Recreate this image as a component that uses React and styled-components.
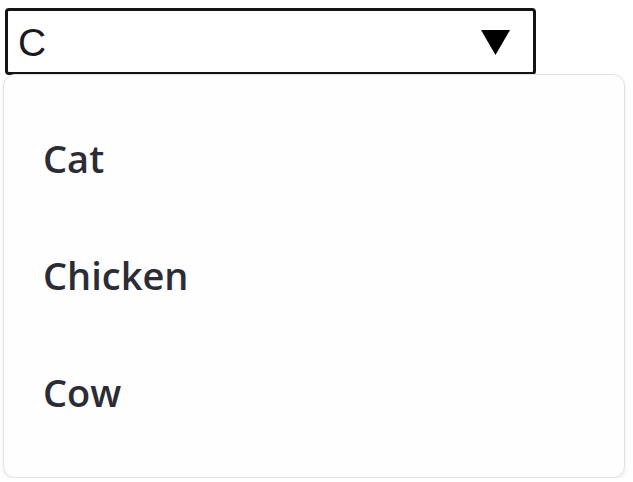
import React from "react";
import styled, { createGlobalStyle } from "styled-components";

const Global = createGlobalStyle`
  html, body { margin: 0; padding: 0; background: #ffffff; }
  body { font-family: "Open Sans", "Liberation Sans", sans-serif; }
`;

const Page = styled.div`
  display: flex;
  flex-direction: column;
  align-items: flex-start;
  padding: 8px 0 0 3px;
`;

const Combo = styled.div`
  box-sizing: border-box;
  margin-left: 2px;
  width: 531px;
  height: 67px;
  border: 3px solid #141414;
  border-radius: 4px;
  display: flex;
  align-items: center;
  justify-content: space-between;
  padding: 0 23px 0 10px;
  background: #ffffff;
`;

const Value = styled.span`
  font-family: "Liberation Sans", Arial, sans-serif;
  font-size: 39px;
  line-height: 1;
  color: #1a1a22;
  margin-top: 1px;
`;

const Arrow = styled.svg`
  width: 29px;
  height: 25px;
  display: block;
  margin-top: 2px;
`;

const Menu = styled.ul`
  box-sizing: border-box;
  list-style: none;
  margin: -1px 0 0 0;
  width: 622px;
  height: 404px;
  padding: 25px 0 0 0;
  background: #fefefe;
  border: 1px solid #e2e2e4;
  border-radius: 12px;
  box-shadow: 0 2px 4px rgba(0, 0, 0, 0.07);
`;

const Item = styled.li`
  height: 117px;
  line-height: 117px;
  padding-left: 39px;
  font-size: 38px;
  font-weight: 600;
  color: #2c2c36;
  font-family: "Open Sans", "Noto Sans", sans-serif;
`;

export default function App() {
  const options = ["Cat", "Chicken", "Cow"];
  return (
    <>
      <Global />
      <Page>
        <Combo>
          <Value>C</Value>
          <Arrow viewBox="0 0 29 25">
            <polygon points="0,0 29,0 14.5,25" fill="#000" />
          </Arrow>
        </Combo>
        <Menu>
          {options.map((o) => (
            <Item key={o}>{o}</Item>
          ))}
        </Menu>
      </Page>
    </>
  );
}
